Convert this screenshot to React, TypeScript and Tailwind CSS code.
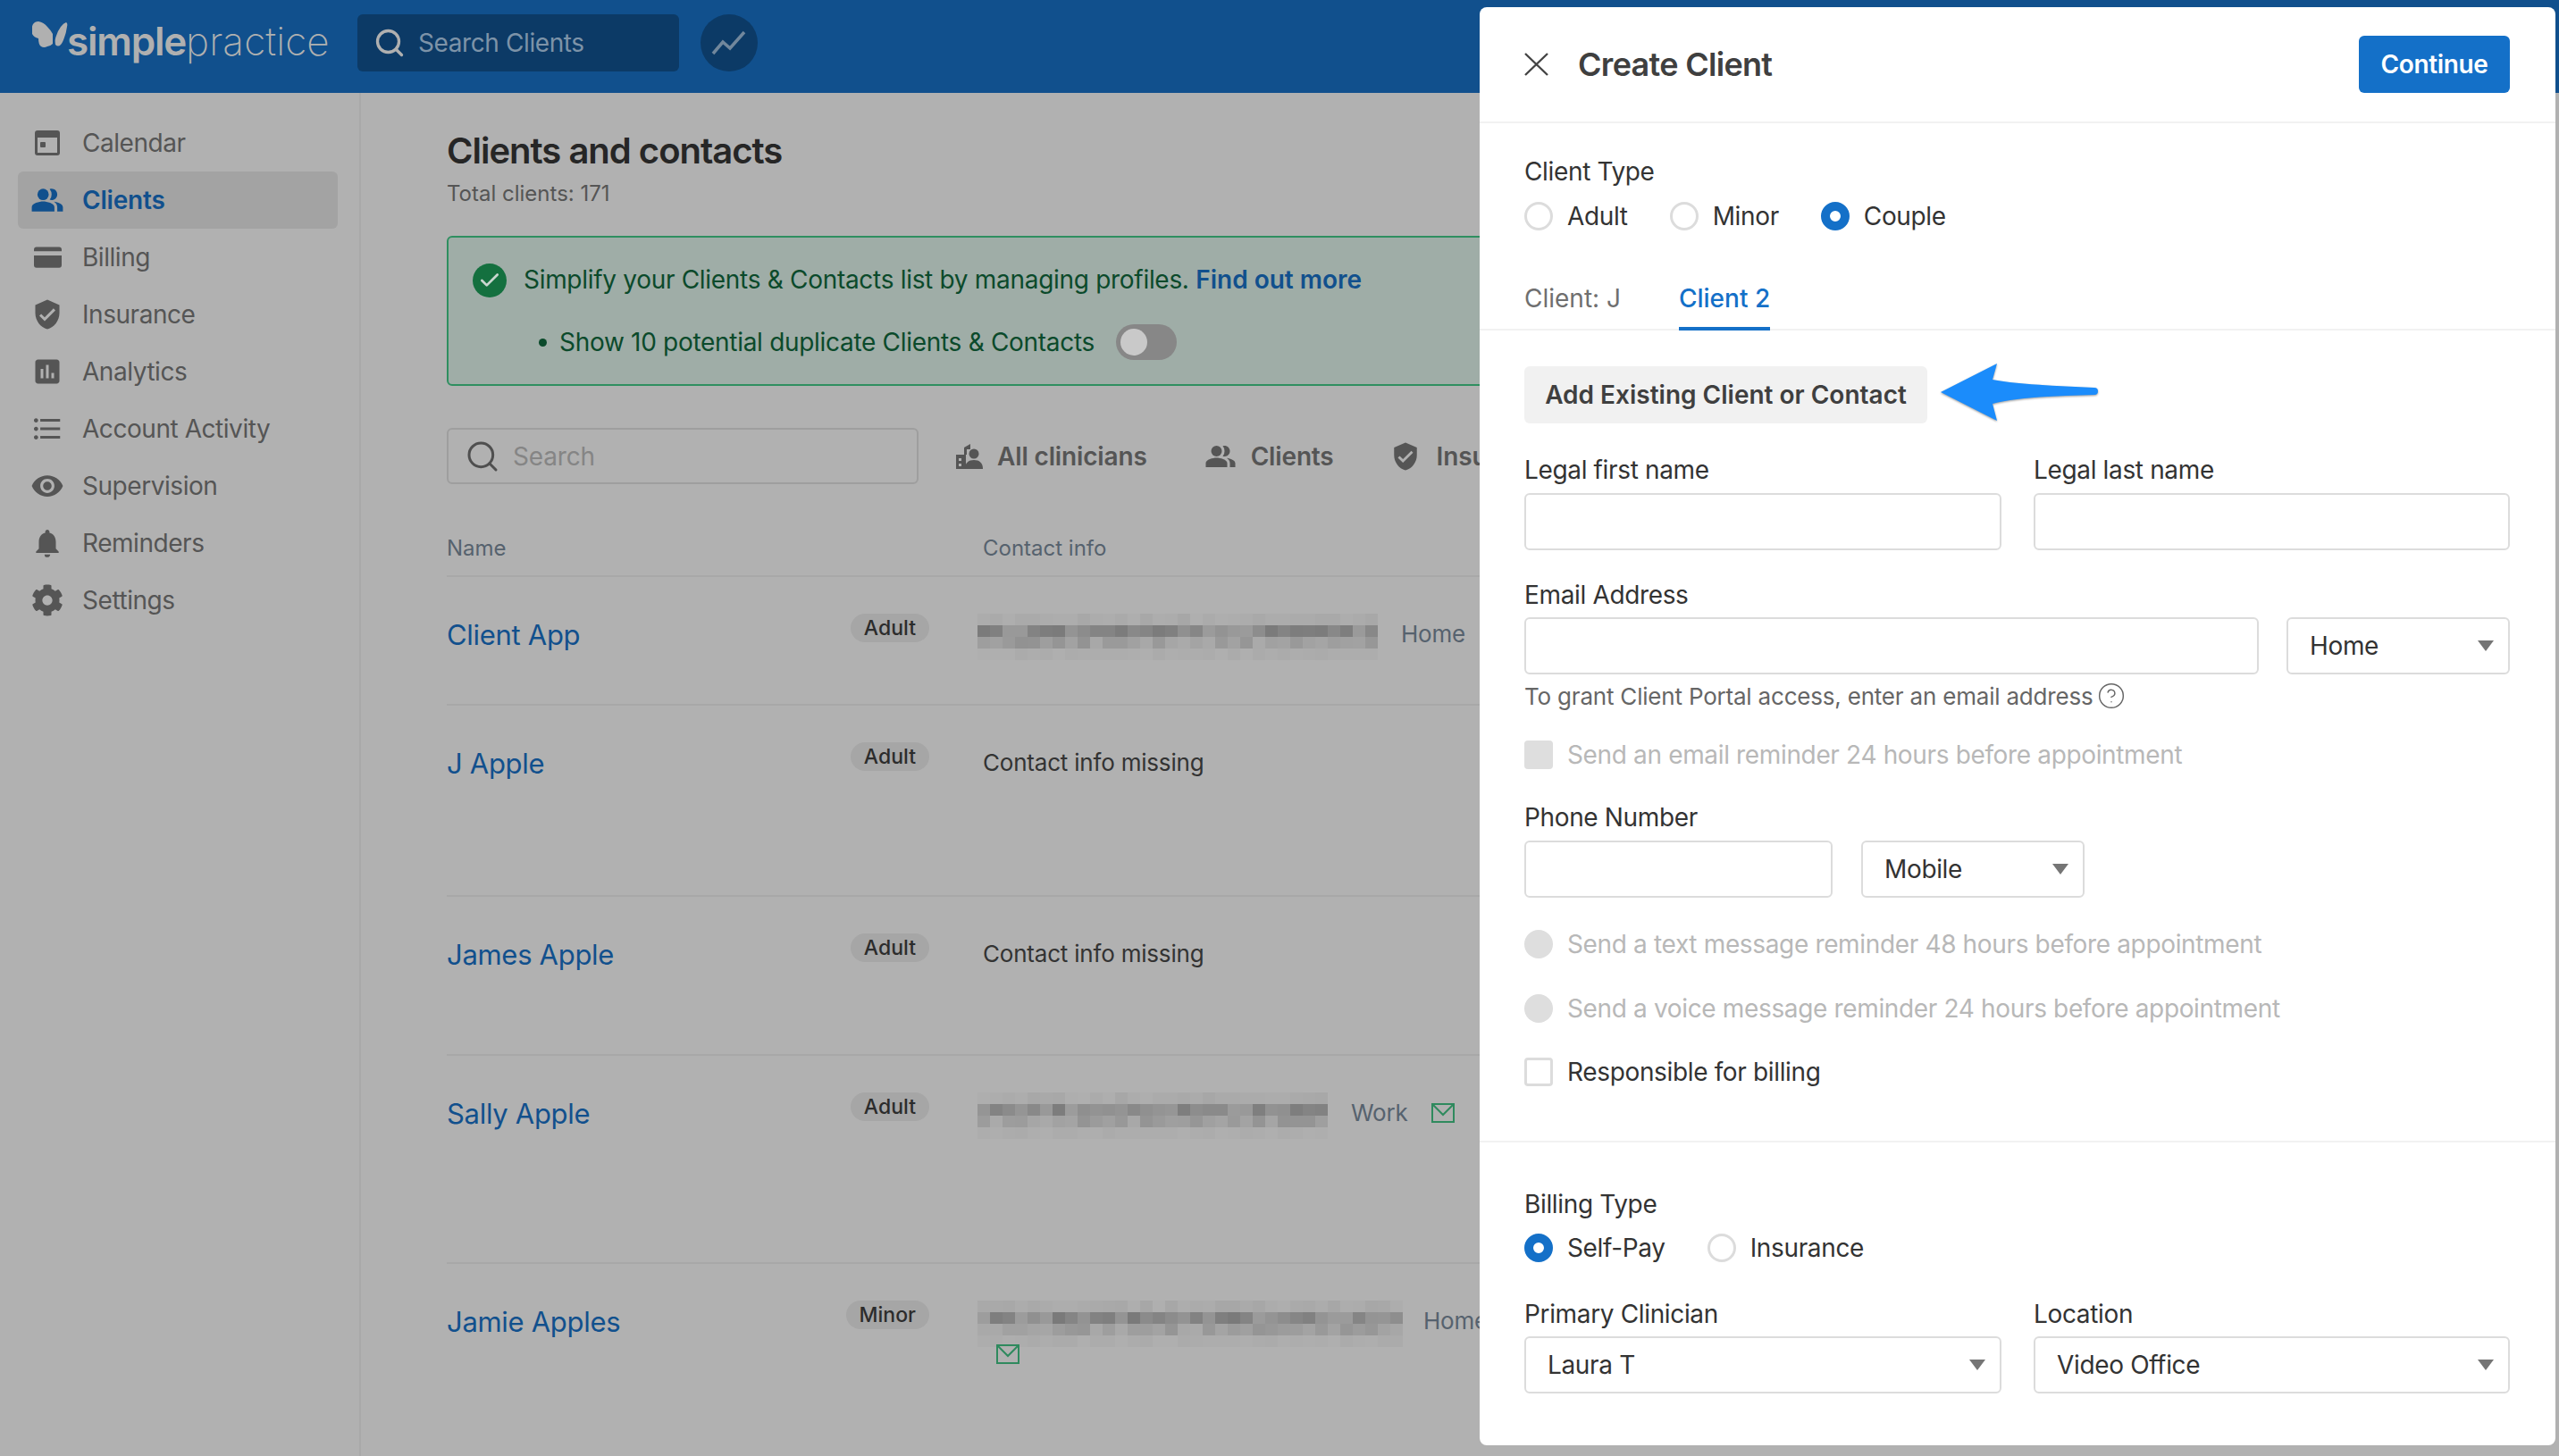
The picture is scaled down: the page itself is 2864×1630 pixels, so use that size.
import type { ReactNode } from "react";
import {
  MdAssessment,
  MdFormatListBulleted,
  MdNotifications,
  MdPeopleAlt,
  MdVerifiedUser,
  MdVisibility,
} from "react-icons/md";
import { FaCog } from "react-icons/fa";
import { Check, CircleHelp, Search } from "lucide-react";

function CalendarIcon({ className }: { className?: string }) {
  return (
    <svg viewBox="0 0 28 28" className={className} fill="currentColor">
      <path d="M3 0h22a3 3 0 0 1 3 3v22a3 3 0 0 1-3 3H3a3 3 0 0 1-3-3V3a3 3 0 0 1 3-3zm0 8v17h22V8H3z" />
      <rect x="6" y="13" width="6" height="6" rx="1" />
    </svg>
  );
}

function CardIcon({ className }: { className?: string }) {
  return (
    <svg viewBox="0 0 32 24" className={className} fill="currentColor">
      <path d="M3 0h26a3 3 0 0 1 3 3v2H0V3a3 3 0 0 1 3-3zM0 10h32v11a3 3 0 0 1-3 3H3a3 3 0 0 1-3-3V10z" />
    </svg>
  );
}

function ClinicianIcon({ className }: { className?: string }) {
  return (
    <svg viewBox="0 0 32 32" className={className} fill="currentColor">
      <path d="M2 14h9V6l7-4v6h-4v6h-1v16H2V14zm3 4v3h3v-3H5zm0 6v3h3v-3H5z" />
      <circle cx="22" cy="13" r="5.5" />
      <path d="M12 30c0-7 4-10 10-10s10 3 10 10H12z" />
    </svg>
  );
}

function MailIcon({ className }: { className?: string }) {
  return (
    <svg viewBox="0 0 26 22" className={className} fill="none" stroke="#2f8a5e" strokeWidth="2">
      <rect x="1" y="1" width="24" height="20" />
      <path d="M1 1l12 12L25 1" />
    </svg>
  );
}

function Caret() {
  return (
    <svg viewBox="0 0 18 12" className="h-[12px] w-[18px]" fill="#757575">
      <path d="M0 0h18L9 12z" />
    </svg>
  );
}

// fake pixelated blur over the contact details
function Mosaic({ cols, seed, className }: { cols: number; seed: number; className?: string }) {
  const cells: ReactNode[] = [];
  let s = seed;
  const next = () => {
    s = (s * 1103515245 + 12345) % 2147483648;
    return s / 2147483648;
  };
  const base = [171, 140, 158, 173];
  const spread = [8, 36, 24, 5];
  for (let r = 0; r < 4; r++) {
    for (let c = 0; c < cols; c++) {
      const v = Math.round(base[r] + (next() - 0.5) * spread[r]);
      cells.push(
        <rect key={`${r}-${c}`} x={c * 14} y={r * 13} width="14" height="13" fill={`rgb(${v},${v},${v})`} />
      );
    }
  }
  return (
    <svg viewBox={`0 0 ${cols * 14} 52`} width={cols * 14} height={52} shapeRendering="crispEdges" className={className}>
      {cells}
    </svg>
  );
}

const navItems = [
  { label: "Calendar", icon: <CalendarIcon className="h-[28px] w-[28px]" /> },
  { label: "Clients", icon: <MdPeopleAlt className="h-[38px] w-[38px]" />, active: true },
  { label: "Billing", icon: <CardIcon className="h-[24px] w-[31px]" /> },
  { label: "Insurance", icon: <MdVerifiedUser className="h-[36px] w-[36px]" /> },
  { label: "Analytics", icon: <MdAssessment className="h-[36px] w-[36px]" /> },
  { label: "Account Activity", icon: <MdFormatListBulleted className="h-[38px] w-[38px]" /> },
  { label: "Supervision", icon: <MdVisibility className="h-[38px] w-[38px]" /> },
  { label: "Reminders", icon: <MdNotifications className="h-[38px] w-[38px]" /> },
  { label: "Settings", icon: <FaCog className="h-[36px] w-[36px]" /> },
];

function Sidebar() {
  return (
    <aside className="flex w-[404px] shrink-0 flex-col border-r-2 border-[#a9a9a9] px-[20px] pt-[24px]">
      {navItems.map((item) => (
        <div
          key={item.label}
          className={`flex h-[64px] w-[358px] items-center rounded-[6px] text-[28px] ${
            item.active ? "bg-[#a3a3a3] font-semibold tracking-[-0.2px] text-[#11508d]" : "tracking-[-0.45px] text-[#555555]"
          }`}
        >
          <span className="mr-[6px] flex w-[66px] shrink-0 items-center justify-center">{item.icon}</span>
          {item.label}
        </div>
      ))}
    </aside>
  );
}

function Badge({ children }: { children: ReactNode }) {
  return (
    <span className="flex h-[32px] items-center rounded-full bg-[#a6a6a6] px-[15px] text-[23px] font-medium text-[#2c2c2c]">
      {children}
    </span>
  );
}

function Row({ name, badge, children, height }: { name: string; badge: string; children: ReactNode; height: string }) {
  return (
    <div className={`grid grid-cols-[540px_1fr] gap-x-[60px] border-b-2 border-[#a8a8a8] pt-[41px] ${height}`}>
      <div className="flex items-start justify-between">
        <span className="mt-[4px] text-[31px] leading-[40px] tracking-[-0.3px] text-[#11508d]">{name}</span>
        <Badge>{badge}</Badge>
      </div>
      <div className="text-[26px] leading-[36px] tracking-[-0.2px] text-[#333333]">{children}</div>
    </div>
  );
}

function ClientList() {
  return (
    <main className="flex-1 overflow-hidden pl-[96px] pt-[41px]">
      <div className="w-[1500px]">
        <h1 className="text-[40px] font-semibold leading-[48px] tracking-[-1px] text-[#262626]">Clients and contacts</h1>
        <p className="mt-[6px] text-[24px] leading-[36px] text-[#555555]">Total clients: 171</p>

        <div className="mt-[29px] h-[168px] rounded-[6px] border-2 border-[#2f8f60] bg-[#9fada7] pl-[27px] pt-[29px] text-[28px] tracking-[-0.3px] text-[#0b4a2b]">
          <div className="flex h-[38px] items-center">
            <span className="flex h-[38px] w-[38px] items-center justify-center rounded-full bg-[#14703f]">
              <Check className="h-[26px] w-[26px] text-[#c9d6cf]" strokeWidth={2.5} />
            </span>
            <span className="ml-[19px] mt-[-2px]">
              Simplify your Clients &amp; Contacts list by managing profiles.{" "}
              <span className="font-semibold tracking-normal text-[#11508d]">Find out more</span>
            </span>
          </div>
          <div className="mt-[30px] flex h-[40px] items-center pl-[74px]">
            <span className="mr-[14px] h-[9px] w-[9px] rounded-full bg-[#0b4a2b]" />
            Show 10 potential duplicate Clients &amp; Contacts
            <span className="ml-[24px] flex h-[40px] w-[68px] items-center rounded-full bg-[#878787] pl-[5px]">
              <span className="h-[30px] w-[30px] rounded-full bg-[#c9c9c9]" />
            </span>
          </div>
        </div>

        <div className="mt-[47px] flex h-[63px] items-center text-[28px] font-semibold tracking-[-0.15px] text-[#555555]">
          <div className="flex h-[63px] w-[528px] items-center rounded-[6px] border-2 border-[#9e9e9e] pl-[18px] font-normal">
            <Search className="h-[40px] w-[40px] text-[#4f4f4f]" strokeWidth={1.8} />
            <span className="ml-[14px] text-[#858585]">Search</span>
          </div>
          <ClinicianIcon className="ml-[40px] h-[32px] w-[32px]" />
          <span className="ml-[16px]">All clinicians</span>
          <MdPeopleAlt className="ml-[64px] h-[36px] w-[36px]" />
          <span className="ml-[16px]">Clients</span>
          <MdVerifiedUser className="ml-[63px] h-[34px] w-[34px]" />
          <span className="ml-[18px]">Insurance</span>
        </div>

        <div className="mt-[53px] grid h-[51px] grid-cols-[600px_1fr] border-b-2 border-[#a8a8a8] pt-[1px] text-[24px] leading-[36px] text-[#56626e]">
          <span>Name</span>
          <span>Contact info</span>
        </div>

        <Row name="Client App" badge="Adult" height="h-[144px]">
          <div className="flex items-center">
            <Mosaic cols={32} seed={11} className="ml-[-6px]" />
            <span className="mb-[6px] ml-[26px] text-[#56626e]">Home</span>
          </div>
        </Row>
        <Row name="J Apple" badge="Adult" height="h-[214px]">
          <div className="mt-[5px]">Contact info missing</div>
        </Row>
        <Row name="James Apple" badge="Adult" height="h-[178px]">
          <div className="mt-[5px]">Contact info missing</div>
        </Row>
        <Row name="Sally Apple" badge="Adult" height="h-[233px]">
          <div className="flex items-center">
            <Mosaic cols={28} seed={29} className="ml-[-6px]" />
            <span className="mb-[6px] ml-[26px] text-[#56626e]">Work</span>
            <MailIcon className="mb-[6px] ml-[26px] h-[22px] w-[26px]" />
          </div>
        </Row>
        <div className="grid grid-cols-[540px_1fr] gap-x-[60px] pt-[41px]">
          <div className="flex items-start justify-between">
            <span className="mt-[4px] text-[31px] leading-[40px] tracking-[-0.3px] text-[#11508d]">Jamie Apples</span>
            <Badge>Minor</Badge>
          </div>
          <div className="text-[26px] leading-[36px] tracking-[-0.2px] text-[#56626e]">
            <div className="flex items-center">
              <Mosaic cols={34} seed={53} className="ml-[-6px]" />
              <span className="mb-[6px] ml-[23px]">Home</span>
            </div>
            <MailIcon className="ml-[15px] mt-[-3px] h-[22px] w-[26px]" />
          </div>
        </div>
      </div>
    </main>
  );
}

function Radio({ label, checked, disabled }: { label: string; checked?: boolean; disabled?: boolean }) {
  let ring = "border-[3px] border-[#dcdcdc] bg-white";
  if (checked) ring = "border-[10px] border-[#1470c8] bg-white";
  if (disabled) ring = "bg-[#dedede]";
  return (
    <span className={`flex items-center gap-[16px] text-[28px] ${disabled ? "text-[#b8b8b8]" : "text-[#333333]"}`}>
      <span className={`h-[32px] w-[32px] rounded-full ${ring}`} />
      {label}
    </span>
  );
}

function Checkbox({ label, disabled }: { label: string; disabled?: boolean }) {
  return (
    <span className={`flex items-center gap-[16px] text-[28px] ${disabled ? "text-[#b8b8b8]" : "text-[#333333]"}`}>
      <span className={`h-[32px] w-[32px] rounded-[4px] ${disabled ? "bg-[#dedede]" : "border-[3px] border-[#dcdcdc] bg-white"}`} />
      {label}
    </span>
  );
}

function Field({ className }: { className: string }) {
  return <input readOnly className={`h-[64px] rounded-[6px] border-2 border-[#dcdcdc] bg-white ${className}`} />;
}

function SelectBox({ value, className }: { value: string; className: string }) {
  return (
    <div
      className={`flex h-[64px] items-center justify-between rounded-[6px] border-2 border-[#dcdcdc] bg-white pl-[24px] pr-[16px] text-[28px] text-[#333333] ${className}`}
    >
      {value}
      <Caret />
    </div>
  );
}

function Label({ children, className }: { children: ReactNode; className?: string }) {
  return <div className={`text-[28px] leading-[36px] text-[#333333] ${className ?? ""}`}>{children}</div>;
}

function CreateClientPanel() {
  return (
    <section className="absolute bottom-[12px] right-[4px] top-[8px] w-[1204px] overflow-hidden rounded-[8px] bg-white tracking-[-0.35px]">
      <header className="flex h-[130px] items-center justify-between border-b-2 border-[#f2f2f2] pl-[50px] pr-[51px]">
        <div className="flex items-center">
          <svg viewBox="0 0 27 26" className="h-[26px] w-[27px]" fill="none" stroke="#444444" strokeWidth="2.4">
            <path d="M1 1l25 24M26 1L1 25" />
          </svg>
          <span className="ml-[33px] text-[36px] font-semibold tracking-[-0.7px] text-[#3f3f3f]">Create Client</span>
        </div>
        <button className="h-[64px] w-[169px] rounded-[6px] bg-[#1470c8] text-[28px] font-semibold text-white">Continue</button>
      </header>

      <div className="pl-[50px] pr-[51px]">
        <Label className="mt-[36px]">Client Type</Label>
        <div className="mt-[11px] flex gap-[47px]">
          <Radio label="Adult" />
          <Radio label="Minor" />
          <Radio label="Couple" checked />
        </div>
      </div>

      <div className="mt-[45px] flex h-[62px] items-start gap-[65px] border-b-2 border-[#f2f2f2] pl-[50px] pt-[6px] text-[28px] tracking-normal">
        <span className="leading-[40px] text-[#6f6f6f]">Client: J</span>
        <span className="h-[56px] border-b-4 border-[#1470c8] font-medium leading-[40px] text-[#1470c8]">Client 2</span>
      </div>

      <div className="pl-[50px] pr-[51px]">
        <div className="mt-[40px] flex items-center">
          <button className="h-[64px] w-[451px] rounded-[6px] bg-[#f1f1f1] text-[28px] font-semibold tracking-normal text-[#3f3f3f]">
            Add Existing Client or Contact
          </button>
          <svg viewBox="0 0 180 68" className="ml-[13px] mt-[-6px] h-[68px] w-[180px] drop-shadow-[0_1px_1px_rgba(0,0,0,0.4)]" fill="#1b8cfb">
            <path d="M2 34 65 2 60 20C85 25 130 27 174 29a4 4 0 0 1 0 8C130 38 85 40 60 47l5 19z" />
          </svg>
        </div>

        <div className="mt-[34px] grid grid-cols-[534px_533px] gap-x-[36px]">
          <Label>Legal first name</Label>
          <Label>Legal last name</Label>
          <Field className="mt-[8px] w-full" />
          <Field className="mt-[8px] w-full" />
        </div>

        <Label className="mt-[32px]">Email Address</Label>
        <div className="mt-[7px] flex gap-[31px]">
          <Field className="w-[822px]" />
          <SelectBox value="Home" className="w-[250px]" />
        </div>
        <div className="mt-[6px] flex h-[36px] items-center gap-[5px] text-[26px] tracking-[-0.2px] text-[#666666]">
          To grant Client Portal access, enter an email address
          <CircleHelp className="h-[32px] w-[32px]" strokeWidth={1.1} />
        </div>

        <div className="mt-[27px] flex">
          <Checkbox label="Send an email reminder 24 hours before appointment" disabled />
        </div>

        <Label className="mt-[31px]">Phone Number</Label>
        <div className="mt-[8px] flex gap-[32px]">
          <Field className="w-[345px]" />
          <SelectBox value="Mobile" className="w-[250px]" />
        </div>

        <div className="mt-[31px] flex">
          <Radio label="Send a text message reminder 48 hours before appointment" disabled />
        </div>
        <div className="mt-[30px] flex">
          <Radio label="Send a voice message reminder 24 hours before appointment" disabled />
        </div>
        <div className="mt-[29px] flex">
          <Checkbox label="Responsible for billing" />
        </div>
      </div>

      <div className="mt-[56px] border-t-2 border-[#f2f2f2] pl-[50px] pr-[51px] pt-[51px]">
        <Label>Billing Type</Label>
        <div className="mt-[10px] flex gap-[47px]">
          <Radio label="Self-Pay" checked />
          <Radio label="Insurance" />
        </div>
        <div className="mt-[35px] grid grid-cols-[534px_533px] gap-x-[36px]">
          <Label>Primary Clinician</Label>
          <Label>Location</Label>
          <SelectBox value="Laura T" className="mt-[7px]" />
          <SelectBox value="Video Office" className="mt-[7px]" />
        </div>
      </div>
    </section>
  );
}

export default function App() {
  return (
    <div className="relative flex h-[1630px] w-[2864px] flex-col overflow-hidden bg-[#b1b1b1] font-['Inter',sans-serif]">
      <div className="flex h-[104px] shrink-0 items-center bg-[#11508d] pb-[8px] pl-[36px]">
        <svg viewBox="0 0 40 30" className="mt-[-18px] h-[30px] w-[40px]" fill="#b0b0b0">
          <path d="M0 14Q-1 6 1 3Q3 0 7 0Q13 1 17 6Q21 10 23 14L23 25Q20 28 17 28Q13 30 10 28Q7 26 7 19Q2 18 0 14z" />
          <path d="M26 26Q25 20 27 16Q29 10 32 6Q35 2 38 1Q40 2 39 6Q38 13 36 18Q34 24 32 26Q29 29 26 26z" />
        </svg>
        <span className="ml-[-1px] mt-[-4px] w-[293px] text-[44px] leading-none text-[#b0b0b0]">
          <span className="font-semibold tracking-[-1.2px]">simple</span>
          <span className="font-extralight tracking-[0.1px]">practice</span>
        </span>
        <div className="ml-[32px] flex h-[64px] w-[360px] items-center rounded-[6px] bg-[#0c3a66] pl-[18px]">
          <Search className="h-[36px] w-[36px] text-[#b0b0b0]" strokeWidth={2.2} />
          <span className="ml-[14px] text-[28px] tracking-[-0.4px] text-[#7d93a8]">Search Clients</span>
        </div>
        <div className="ml-[24px] flex h-[64px] w-[64px] items-center justify-center rounded-full bg-[#0c3a66]">
          <svg viewBox="0 0 40 30" className="h-[30px] w-[40px]" fill="none" stroke="#71879c" strokeWidth="3.5">
            <path d="M2 27l11-13 8 7L37 3" />
          </svg>
        </div>
      </div>
      <div className="flex min-h-0 flex-1">
        <Sidebar />
        <ClientList />
      </div>
      <CreateClientPanel />
    </div>
  );
}
